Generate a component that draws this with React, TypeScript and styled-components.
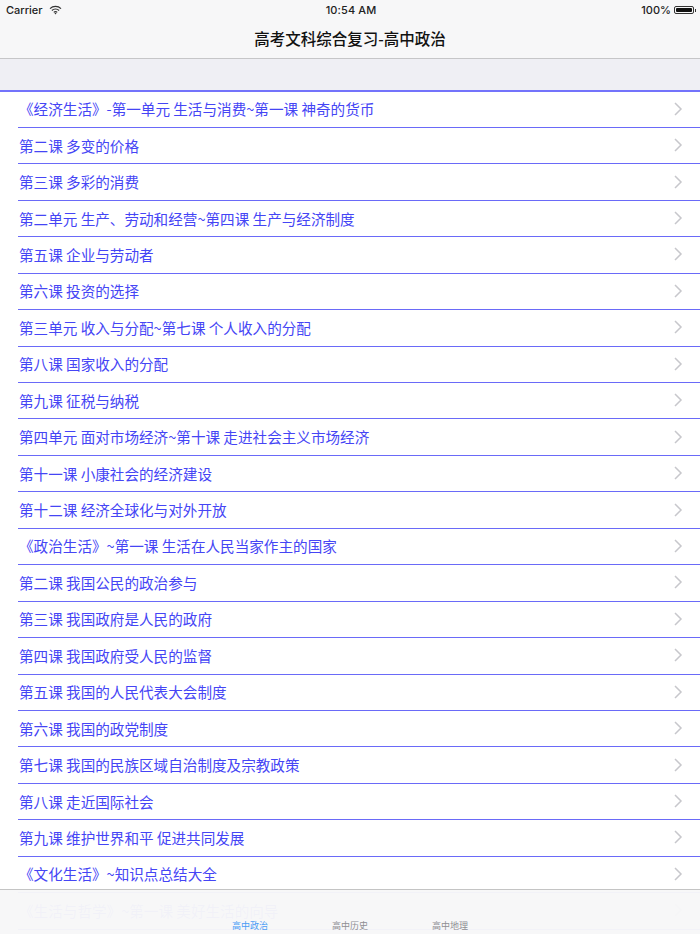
import React from 'react'
import styled, { createGlobalStyle } from 'styled-components'

const lessons = [
	'《经济生活》-第一单元 生活与消费~第一课 神奇的货币',
	'第二课 多变的价格',
	'第三课 多彩的消费',
	'第二单元 生产、劳动和经营~第四课 生产与经济制度',
	'第五课 企业与劳动者',
	'第六课 投资的选择',
	'第三单元 收入与分配~第七课 个人收入的分配',
	'第八课 国家收入的分配',
	'第九课 征税与纳税',
	'第四单元 面对市场经济~第十课 走进社会主义市场经济',
	'第十一课 小康社会的经济建设',
	'第十二课 经济全球化与对外开放',
	'《政治生活》~第一课 生活在人民当家作主的国家',
	'第二课 我国公民的政治参与',
	'第三课 我国政府是人民的政府',
	'第四课 我国政府受人民的监督',
	'第五课 我国的人民代表大会制度',
	'第六课 我国的政党制度',
	'第七课 我国的民族区域自治制度及宗教政策',
	'第八课 走近国际社会',
	'第九课 维护世界和平 促进共同发展',
	'《文化生活》~知识点总结大全',
	'《生活与哲学》~第一课 美好生活的向导',
]

const tabs = ['高中政治', '高中历史', '高中地理']

function App() {
	return (
		<Page>
			<GlobalStyle />
			<NavBar>
				<StatusBar>
					<StatusLeft>
						<span>Carrier</span>
						<svg width='13' height='10' viewBox='0 0 13 10' fill='none' stroke='#333' strokeWidth='1.2'>
							<path d='M1 3.6a7.8 7.8 0 0 1 11 0' />
							<path d='M2.9 5.5a5.1 5.1 0 0 1 7.2 0' />
							<path d='M4.8 7.3a2.4 2.4 0 0 1 3.4 0' />
							<path d='M6.5 9.4 5.5 8.2a1.5 1.5 0 0 1 2 0z' fill='#333' stroke='none' />
						</svg>
					</StatusLeft>
					<StatusTime>10:54 AM</StatusTime>
					<StatusRight>
						<span>100%</span>
						<Battery>
							<BatteryFill />
						</Battery>
						<BatteryCap />
					</StatusRight>
				</StatusBar>
				<NavTitle>高考文科综合复习-高中政治</NavTitle>
			</NavBar>
			<SectionGap />
			<List>
				{lessons.map((item, index) => {
					return (
						<Row key={index}>
							<RowText>{item}</RowText>
							<svg width='9' height='14' viewBox='0 0 9 14' fill='none' stroke='#c7c7cc' strokeWidth='1.5'>
								<path d='M1 1l6 6-6 6' />
							</svg>
						</Row>
					)
				})}
			</List>
			<TabBar>
				{tabs.map((item, index) => {
					return (
						<TabItem key={item} $active={index === 0}>
							{item}
						</TabItem>
					)
				})}
			</TabBar>
		</Page>
	)
}

const GlobalStyle = createGlobalStyle`
	html, body {
		margin: 0;
		padding: 0;
		background: #fff;
	}
`

const Page = styled.div`
	position: relative;
	width: 700px;
	height: 934px;
	overflow: hidden;
	background: #fff;
	font-family: 'Inter', 'Liberation Sans', 'Noto Sans CJK SC', sans-serif;
`

const NavBar = styled.div`
	height: 58px;
	background: #f7f7f8;
	border-bottom: 1px solid #c6c6c8;
`

const StatusBar = styled.div`
	height: 20px;
	display: grid;
	grid-template-columns: 1fr auto 1fr;
	align-items: center;
	padding: 0 4px 0 6px;
	font-size: 11px;
	font-weight: 500;
	color: #222;
`

const StatusLeft = styled.div`
	display: flex;
	align-items: center;
	gap: 6px;
`

const StatusTime = styled.div`
	text-align: center;
	letter-spacing: 0.1px;
`

const StatusRight = styled.div`
	display: flex;
	align-items: center;
	justify-content: flex-end;
`

const Battery = styled.div`
	width: 20px;
	height: 8px;
	box-sizing: border-box;
	margin-left: 3px;
	padding: 1px;
	border: 1px solid #333;
	border-radius: 2px;
`

const BatteryFill = styled.div`
	height: 100%;
	background: #111;
	border-radius: 1px;
`

const BatteryCap = styled.div`
	width: 1px;
	height: 3px;
	margin-left: 1px;
	background: #333;
`

const NavTitle = styled.div`
	height: 36px;
	line-height: 36px;
	text-align: center;
	font-size: 15.5px;
	font-weight: 500;
	color: #111;
	font-family: 'Noto Sans CJK SC', sans-serif;
`

const SectionGap = styled.div`
	height: 30.5px;
	background: #efeff4;
`

const List = styled.div`
	border-top: 2px solid #7373fb;
`

const Row = styled.div`
	height: 36.45px;
	box-sizing: border-box;
	display: flex;
	align-items: center;
	justify-content: space-between;
	margin-left: 18px;
	padding-right: 17px;
	padding-bottom: 1px;
	border-bottom: 1.5px solid #6a6af8;
`

const RowText = styled.span`
	margin-left: 1px;
	font-size: 14.6px;
	color: #4545f5;
	font-family: 'Noto Sans CJK SC', sans-serif;
	white-space: nowrap;
`

const TabBar = styled.div`
	position: absolute;
	left: 0;
	right: 0;
	bottom: 0;
	height: 45px;
	display: flex;
	justify-content: center;
	align-items: flex-end;
	gap: 64px;
	padding-bottom: 2px;
	box-sizing: border-box;
	background: rgba(247, 247, 248, 0.97);
	border-top: 1px solid #c4c4c4;
`

const TabItem = styled.div<{ $active: boolean }>`
	width: 36px;
	font-size: 9px;
	line-height: 12px;
	white-space: nowrap;
	text-align: center;
	color: ${(props) => (props.$active ? '#4a9cf5' : '#8e8e93')};
	font-family: 'Noto Sans CJK SC', sans-serif;
`

export default App
